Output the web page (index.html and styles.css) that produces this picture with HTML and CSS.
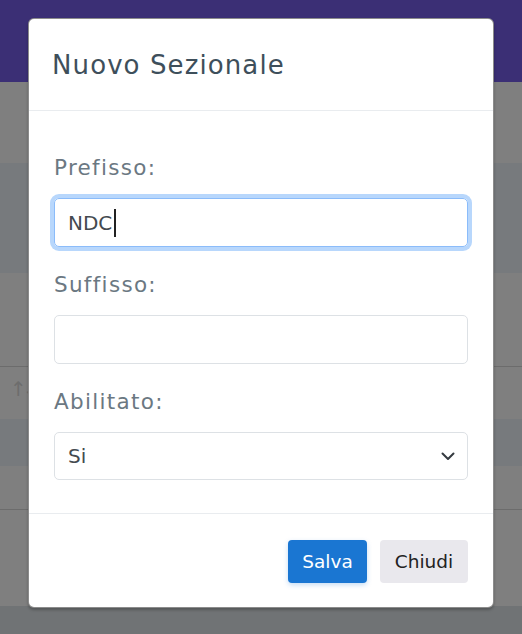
FILE: index.html
```html
<!DOCTYPE html>
<html lang="it">
  <head>
    <meta charset="UTF-8" />
    <title>Nuovo Sezionale</title>
    <meta name="viewport" content="width=device-width, initial-scale=1.0" />
    <link rel="stylesheet" href="styles.css">
  </head>
  <body>
    <!-- page behind the dialog, already dimmed by the backdrop -->
    <div class="page">
      <div class="topbar"></div>
      <div class="band"></div>
      <div class="band band-dark band-tall"></div>
      <div class="band band-mid lined"></div>
      <div class="band band-sort"><span class="sort">↑↓</span></div>
      <div class="band band-dark band-thin"></div>
      <div class="band band-short lined"></div>
      <div class="band band-last"></div>
      <div class="page-foot"></div>
    </div>

    <div class="modal">
      <div class="modal-header">
        <h5 class="modal-title">Nuovo Sezionale</h5>
      </div>
      <div class="modal-body">
        <div class="field">
          <label for="prefisso">Prefisso:</label>
          <div class="control focused" id="prefisso">NDC<span class="caret"></span></div>
        </div>
        <div class="field">
          <label for="suffisso">Suffisso:</label>
          <div class="control" id="suffisso"></div>
        </div>
        <div class="field">
          <label for="abilitato">Abilitato:</label>
          <div class="control select" id="abilitato">
            Si
            <svg class="chevron" width="14" height="9" viewBox="0 0 14 9">
              <path d="M1.5 1.5 L7 7 L12.5 1.5" fill="none" stroke="#343a40" stroke-width="2" stroke-linecap="round" stroke-linejoin="round"/>
            </svg>
          </div>
        </div>
      </div>
      <div class="modal-footer">
        <button class="btn btn-primary">Salva</button>
        <button class="btn btn-light">Chiudi</button>
      </div>
    </div>
  </body>
</html>
```

FILE: styles.css
```css
/* --- Reset & base styles --- */
*, *::before, *::after {
  box-sizing: border-box;
  margin: 0;
  padding: 0;
}
body {
  font-family: "DejaVu Sans", "Noto Sans", sans-serif;
  width: 522px;
  height: 634px;
  overflow: hidden;
  position: relative;
  background: #707375;
}

/* --- Dimmed page behind --- */
.topbar {
  height: 82px;
  background: #3b2f75;
}
.band {
  height: 81px;
  background: #7f7f7f;
}
.band-dark {
  background: #777a7d;
}
.band-tall {
  height: 110px;
}
.band-mid {
  height: 94px;
}
.lined {
  border-bottom: 1px solid #6c6c6c;
}
.band-sort {
  height: 52px;
  padding: 10px 0 0 10px;
}
.sort {
  color: #6d6d6d;
  font-size: 20px;
  letter-spacing: -4px;
}
.band-thin {
  height: 47px;
}
.band-short {
  height: 44px;
}
.band-last {
  height: 96px;
}
.page-foot {
  height: 27px;
  background: #707375;
}

/* --- Modal --- */
.modal {
  position: absolute;
  top: 18px;
  left: 28px;
  width: 466px;
  background: #fff;
  border: 1px solid rgba(0, 0, 0, 0.45);
  border-radius: 6px;
  box-shadow: 0 2px 3px rgba(0, 0, 0, 0.25);
}
.modal-header {
  height: 92px;
  display: flex;
  align-items: center;
  padding: 0 23px;
  border-bottom: 1px solid #e9ecef;
}
.modal-title {
  font-size: 26px;
  font-weight: 400;
  color: #3e4f5b;
  letter-spacing: 1.1px;
}
.modal-body {
  padding: 42px 25px 33px;
  display: flex;
  flex-direction: column;
  gap: 23px;
}
.field label {
  display: block;
  font-size: 21.5px;
  line-height: 30px;
  color: #6b7882;
  letter-spacing: 1.3px;
  margin-bottom: 15px;
}
.control {
  height: 49px;
  border: 1px solid #dde1e5;
  border-radius: 5px;
  padding: 0 13px;
  display: flex;
  align-items: center;
  font-size: 20px;
  color: #444a50;
}
.control.focused {
  border-color: #8bbcfa;
  box-shadow: 0 0 0 4px #b8d7fc;
}
.caret {
  display: inline-block;
  width: 1.5px;
  height: 28px;
  background: #222;
  margin-left: 2px;
}
.select {
  height: 48px;
  justify-content: space-between;
  padding-right: 12px;
}

/* --- Footer buttons --- */
.modal-footer {
  border-top: 1px solid #e9ecef;
  display: flex;
  justify-content: flex-end;
  gap: 13px;
  padding: 26px 25px 24px;
}
.btn {
  height: 43px;
  padding: 0 14px;
  font-family: inherit;
  font-size: 18.5px;
  border: none;
  border-radius: 4px;
  cursor: pointer;
}
.btn-primary {
  width: 79px;
  background: #1a76d2;
  color: #fff;
  box-shadow: 0 2px 5px rgba(26, 118, 210, 0.25);
}
.btn-light {
  width: 88px;
  background: #e9e8ed;
  color: #222;
}
```
